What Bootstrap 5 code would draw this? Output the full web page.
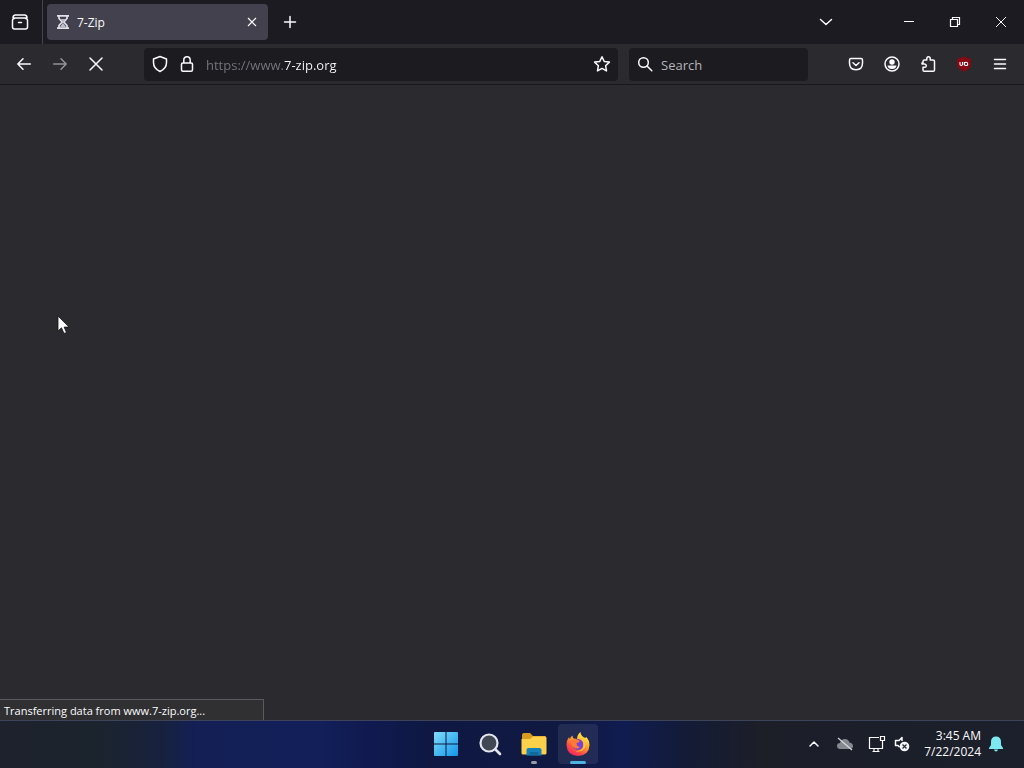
<!DOCTYPE html>
<html lang="en" data-bs-theme="dark">
<head>
<meta charset="utf-8">
<meta name="viewport" content="width=device-width, initial-scale=1">
<title>7-Zip</title>
<link href="https://cdn.jsdelivr.net/npm/bootstrap@5.3.0/dist/css/bootstrap.min.css" rel="stylesheet">
<style>
body{background:#2b2a2e;color:#fbfbfe;font-family:"Open Sans","Noto Sans",sans-serif;font-size:12px;line-height:16px;overflow:hidden}
svg{display:block;flex:none}
.ln{fill:none;stroke:currentColor;stroke-width:1.5;stroke-linecap:round;stroke-linejoin:round}
.icon-btn{display:flex;align-items:center;justify-content:center;width:36px;height:36px;padding:0;border:0;background:none;color:inherit;border-radius:4px;flex:none}
.icon-btn:hover{background:#ffffff18}
.icon-btn.slim{width:32px}
.titlebar{background:#1c1b22;height:44px}
.view-cell{width:43px;height:44px;padding-left:2px;border-right:1px solid #45444c}
.tab-item{background:#42414d;width:221px;height:36px;border-radius:4px;margin-left:4px;padding-left:8px}
.tab-label{margin-left:6px;padding-top:2px}
.tabs-list{margin-right:42px}
.win-btn{width:46px;height:44px}
.toolbar{background:#2b2a2f;height:41px;border-bottom:1px solid #18171c;padding:0 6px}
.field-box{background:#1c1b20;height:33px;border-radius:4px}
.field-box input{border:0;outline:0;padding:2px 0 0;min-width:0;font-size:13px;line-height:20px;height:22px;color:#fbfbfe;background:none}
.field-box .url-input{color:transparent;background:linear-gradient(90deg,#77767d 78px,#fbfbfe 78px);-webkit-background-clip:text;background-clip:text}
.field-box input::placeholder{color:#b5b4ba;opacity:1}
.url-area{margin-left:30px;margin-right:11px;gap:12px}
.search-area{width:179px;margin-right:30px}
.status-line{width:264px;height:21px;border:1px solid #5b5a60;border-left:0;border-bottom:0;background:#303032;padding:3px 4px 0;font-size:11px}
.taskbar{display:grid;grid-template-columns:1fr auto 1fr;height:48px;padding-bottom:2px;border-top:1px solid #3d445a;background:linear-gradient(90deg,#1e222c 0,#1b242e 10%,#17213f 16%,#131f55 19%,#121f59 31%,#101a50 36%,#0e1842 42%,#101942 55%,#101c50 61%,#131b37 67%,#1c1e28 74%,#1b1f29 86%,#1b202c 100%)}
.task-btn{width:40px;height:40px}
.task-btn.current{background:#ffffff14}
.run-mark{position:absolute;bottom:0;left:50%;transform:translateX(-50%);height:3px;width:6px;border-radius:2px;background:#9a9ba5}
.current .run-mark{width:16px;background:#4cb2e0}
.tray-area{padding-right:21px}
.tray-btn{height:40px}
.tray-btn.status-pair{margin:0 14px}
.pointer{position:absolute;left:57px;top:230px}
</style>
</head>
<body class="vh-100 d-flex flex-column">
<header>
  <div class="titlebar d-flex align-items-center">
    <div class="view-cell d-flex align-items-center">
      <button class="icon-btn" aria-label="Firefox View"><svg width="18" height="18" viewBox="0 0 18 18" class="ln"><path d="M4.500 2h9Q16 2 16 5H2Q2 2 4.500 2ZM3.500 5.500Q1.500 5.500 1.500 7.500V14Q1.500 16 3.500 16h11q2 0 2-2V7.500q0-2-2-2M7.500 9.500h3"/></svg></button>
    </div>
    <div class="tab-item d-flex align-items-center">
      <svg width="16" height="16" viewBox="0 0 16 16" fill="none" stroke="#e2e1e8" stroke-width="1.700"><path d="M2 1.800h12M2 14.200h12M4 2v2.500L7.200 8 4 11.500V14M12 2v2.500L8.800 8 12 11.500V14"/><path d="M5.500 5h5L8 7.800ZM8 8.700l3 4.300H5Z" fill="#bbbac3" stroke="none"/></svg>
      <span class="tab-label flex-fill">7-Zip</span>
      <button class="icon-btn slim" aria-label="Close tab"><svg width="10" height="10" viewBox="0 0 10 10" fill="none" stroke="currentColor" stroke-width="1.200"><path d="m1 1 8 8M9 1 1 9"/></svg></button>
    </div>
    <button class="icon-btn ms-1" aria-label="New tab"><svg width="14" height="14" viewBox="0 0 14 14" class="ln"><path d="M7 1.500v11M1.500 7h11"/></svg></button>
    <button class="icon-btn tabs-list ms-auto" aria-label="List all tabs"><svg width="14" height="14" viewBox="0 0 14 14" class="ln"><path d="m1.500 4.500 5.500 5 5.500-5"/></svg></button>
    <button class="icon-btn win-btn" aria-label="Minimize"><svg width="12" height="12" viewBox="0 0 12 12"><path d="M1 5.500h10" stroke="currentColor"/></svg></button>
    <button class="icon-btn win-btn" aria-label="Restore"><svg width="12" height="12" viewBox="0 0 12 12" fill="none" stroke="currentColor" stroke-width="1.200"><path d="M1.500 3.500h7v7h-7ZM3.500 3V1.500h7v7H9"/></svg></button>
    <button class="icon-btn win-btn" aria-label="Close"><svg width="12" height="12" viewBox="0 0 12 12" stroke="currentColor"><path d="m1 1 10 10M11 1 1 11"/></svg></button>
  </div>
  <nav class="toolbar d-flex align-items-center">
    <button class="icon-btn" aria-label="Back"><svg width="16" height="16" viewBox="0 0 16 16" class="ln"><path d="M14.300 8H1.800M7 2.800 1.800 8 7 13.200"/></svg></button>
    <button class="icon-btn opacity-50" aria-label="Forward"><svg width="16" height="16" viewBox="0 0 16 16" class="ln"><path d="M1.700 8h12.500M9 2.800 14.200 8 9 13.200"/></svg></button>
    <button class="icon-btn" aria-label="Stop"><svg width="16" height="16" viewBox="0 0 16 16" class="ln"><path d="m2 2 12 12M14 2 2 14"/></svg></button>
    <div class="field-box url-area d-flex align-items-center flex-fill ps-2">
      <svg width="16" height="18" viewBox="0 0 16 18" class="ln"><path d="M8 1.500 14.500 4V7.500Q14.500 13.500 8 16.500 1.500 13.500 1.500 7.500V4Z"/></svg>
      <svg width="14" height="18" viewBox="0 0 14 18" class="ln"><path d="M2.800 8h8.400q1.300 0 1.300 1.300v5.400q0 1.500-1.500 1.500H3q-1.500 0-1.500-1.500V9.300Q1.500 8 2.800 8ZM3.800 8V5q0-3.300 3.200-3.300T10.200 5V8"/></svg>
      <input class="url-input flex-fill" type="text" aria-label="Address" value="https://www.7-zip.org">
      <button class="icon-btn slim" aria-label="Bookmark this page"><svg width="18" height="18" viewBox="0 0 18 18" class="ln"><path d="m9 1.700 2.200 4.700 5.200.7-3.800 3.600.9 5.200L9 13.400l-4.500 2.500.9-5.200L1.600 7.100l5.200-.7Z"/></svg></button>
    </div>
    <div class="field-box search-area d-flex align-items-center ps-2">
      <svg width="16" height="16" viewBox="0 0 16 16" class="ln"><circle cx="6.500" cy="6.500" r="4.800"/><path d="m10 10 4.800 4.800"/></svg>
      <input class="ms-2 flex-fill" type="search" aria-label="Search" placeholder="Search">
    </div>
    <button class="icon-btn" aria-label="Save to Pocket"><svg width="16" height="16" viewBox="0 0 16 16" class="ln"><path d="M3 2.500h10q1.500 0 1.500 1.500v3q0 6.700-6.500 6.700T1.500 7V4Q1.500 2.500 3 2.500ZM5 6.700l3 2.800 3-2.800"/></svg></button>
    <button class="icon-btn" aria-label="Account"><svg width="16" height="16" viewBox="0 0 16 16"><circle cx="8" cy="8" r="7" class="ln"/><circle cx="8" cy="6" r="2.700" fill="currentColor"/><path d="M3.500 9.500h9Q12 13 8 13T3.500 9.500Z" fill="currentColor"/></svg></button>
    <button class="icon-btn" aria-label="Extensions"><svg width="16" height="18" viewBox="0 0 16 18" class="ln"><path d="M6.800 5V3.500Q6.800 1.700 8.500 1.700T10.200 3.500V5H13q1.500 0 1.500 1.500V15q0 1.300-1.300 1.300H4.200Q3 16.300 3 15v-2.700h1.500q1.800 0 1.800-1.600T4.500 9H2V8M3 8V6.500Q3 5 4.500 5H6.800"/></svg></button>
    <button class="icon-btn" aria-label="uBlock Origin"><svg width="16" height="16" viewBox="0 0 16 16"><path d="M8 .5q3 1.500 6.500 2 .8 3 .5 6-.5 4.500-7 7-6.500-2.500-7-7-.3-3 .5-6Q5 2 8 .5Z" fill="#860914"/><path d="M4 6v2.300q0 1.200 1.200 1.200t1.300-1.200V6M8.300 6v3.200M8.300 8q0-1.700 1.700-1.700T11.700 8 10 9.500 8.300 8" fill="none" stroke="#fff" stroke-width="1.100"/></svg></button>
    <button class="icon-btn" aria-label="Menu"><svg width="14" height="14" viewBox="0 0 14 14" class="ln"><path d="M1.500 2.500h11M1.500 7h11M1.500 11.500h11"/></svg></button>
  </nav>
</header>
<main class="flex-fill d-flex flex-column justify-content-end position-relative">
  <svg class="pointer" width="13" height="20" viewBox="0 0 13 20"><path d="M1 1v15l3.500-3.200L7 18.500l2.500-1-2.400-5.400H12Z" fill="#fff" stroke="#111" stroke-width=".8"/></svg>
  <div class="status-line" role="status">Transferring data from www.7-zip.org...</div>
</main>
<footer class="taskbar align-items-center">
  <div></div>
  <div class="d-flex gap-1">
    <button class="icon-btn task-btn" aria-label="Start"><svg width="24" height="24" viewBox="0 0 24 24"><defs><linearGradient id="win" x2="1" y2="1"><stop stop-color="#80dcfb"/><stop offset="1" stop-color="#1296ea"/></linearGradient></defs><path d="M0 1q0-1 1-1h10.500v11.500H0ZM12.500 0H23q1 0 1 1v10.500H12.500ZM0 12.500h11.500V24H1q-1 0-1-1ZM12.500 12.500H24V23q0 1-1 1H12.500Z" fill="url(#win)"/></svg></button>
    <button class="icon-btn task-btn" aria-label="Search Windows"><svg width="24" height="24" viewBox="0 0 24 24"><circle cx="11" cy="11" r="8.500" fill="#424754" stroke="#e1e5ed" stroke-width="2.200"/><path d="m17.500 17.500 4.500 4.500" stroke="#e1e5ed" stroke-width="2.600" stroke-linecap="round"/></svg></button>
    <button class="icon-btn task-btn position-relative" aria-label="File Explorer"><svg width="26" height="24" viewBox="0 0 26 24"><path d="M1 3q0-2 2-2h6l3 3h12q1 0 1 2v4H1Z" fill="#d99a20"/><path d="M1 7h8l3-2.500h12q1.500 0 1.500 1.500v15q0 1.500-1.500 1.500H2Q.500 22.500.500 21V7Z" fill="#fbd04b"/><path d="M5.500 23.500V18q0-2 2-2h11q2 0 2 2v5.500Z" fill="#1680b8"/><path d="M8.500 23.500V21q0-1 1-1h7q1 0 1 1v2.500Z" fill="#126a9c"/></svg><span class="run-mark"></span></button>
    <button class="icon-btn task-btn current position-relative" aria-label="Firefox"><svg width="24" height="24" viewBox="0 0 24 24"><defs><linearGradient id="fox" x1=".85" y1="0" x2=".25" y2="1"><stop offset=".1" stop-color="#fff14c"/><stop offset=".4" stop-color="#ffae2b"/><stop offset=".7" stop-color="#ff573f"/><stop offset="1" stop-color="#ef2165"/></linearGradient></defs><path d="M14.500 0q0 3 3.500 5.500Q20.300 6 20.500 5q3 3.500 3 8Q23 23.500 12 24 1 23.500.500 13 .500 8 3 5q.5 2 1 2 0-2 2.500-3.500 0 2.500 1.500 3l3 .5Q11 3 14.500 0Z" fill="url(#fox)"/><circle cx="12" cy="12.500" r="5.400" fill="#7842d5"/><path d="M5 9q2-3 6-1.500l3 1.500q-1 2-3.500 2 0 3.500 3.500 4-3 2.500-6 .5T5 9Z" fill="#ff7b35"/><path d="M16 7q5 4 2.500 9-3 5-9 3 8 0 8-6 0-3-1.500-6Z" fill="#ffca3a"/></svg><span class="run-mark"></span></button>
  </div>
  <div class="tray-area d-flex align-items-center justify-content-end">
    <button class="icon-btn tray-btn" aria-label="Show hidden icons"><svg width="12" height="12" viewBox="0 0 12 12" class="ln"><path d="m2 8 4-4 4 4"/></svg></button>
    <button class="icon-btn tray-btn w-auto ps-1" aria-label="OneDrive"><svg width="18" height="16" viewBox="0 0 18 16"><path d="M4 13q-3-.5-3-3 0-3 3-3 1-4 5-4 3.500 0 4.500 3.500Q17 7 17 10t-3.500 3Z" fill="#858990"/><path d="m2 2 14 12" stroke="#d5d7dc" stroke-width="1.300"/></svg></button>
    <button class="icon-btn tray-btn status-pair w-auto gap-2" aria-label="Network and volume"><svg width="18" height="18" viewBox="0 0 18 18" fill="none" stroke="currentColor" stroke-width="1.200"><path d="M11 2.500H1.500v11h13V8M4.500 16.500h7M6 13.500v3M10 13.500v3M12.500 1.500h4v4h-4ZM14.500 5.500V10"/></svg><svg width="16" height="16" viewBox="0 0 16 16"><path d="M8 4.500V1.500L5 4.500H1.500v5H4l1.200 1.200" class="ln" stroke-width="1.200"/><circle cx="10.500" cy="10.500" r="4.800" fill="#f5f6f8"/><path d="m8.500 8.500 4 4M12.500 8.500l-4 4" stroke="#252a35" stroke-width="1.200"/></svg></button>
    <time class="text-end" datetime="2024-07-22T03:45">3:45 AM<br>7/22/2024</time>
    <button class="icon-btn tray-btn w-auto ms-2" aria-label="Notifications"><svg width="14" height="16" viewBox="0 0 14 16"><path d="M7 .5Q12 .5 12 6v3l2 3v1H0v-1l2-3V6Q2 .5 7 .5ZM5 13.500h4Q8.500 15.500 7 15.500T5 13.500Z" fill="#7ceaf0"/></svg></button>
  </div>
</footer>
<script src="https://cdn.jsdelivr.net/npm/bootstrap@5.3.0/dist/js/bootstrap.bundle.min.js"></script>
</body>
</html>
